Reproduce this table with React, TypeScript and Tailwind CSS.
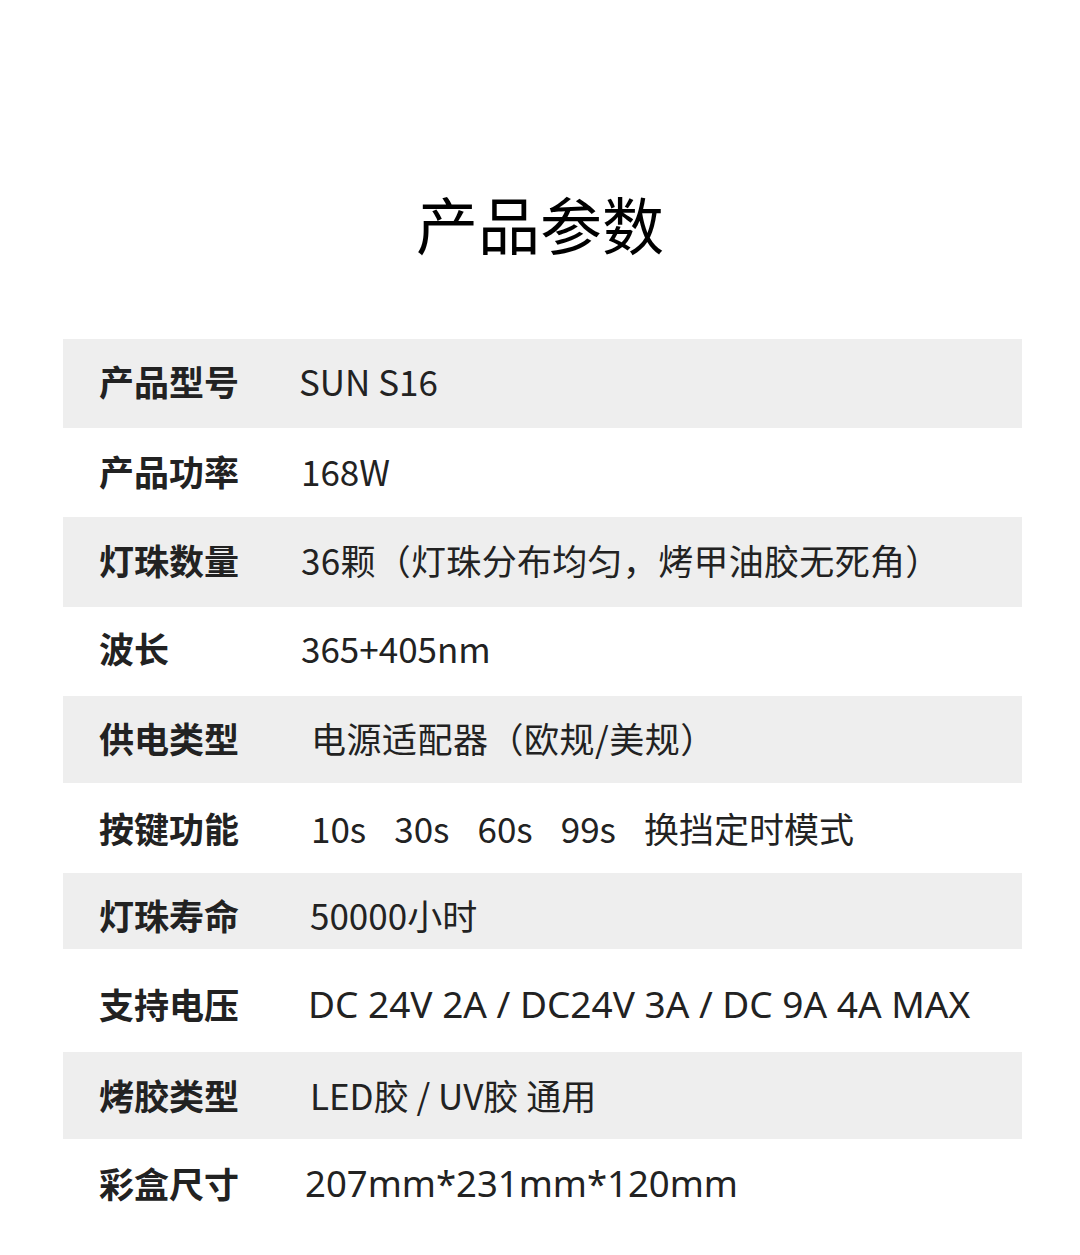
const font = "font-['Noto_Sans_CJK_SC','Noto_Sans',sans-serif]";

type Row = {
  label: string;
  value: string;
  gray: boolean;
  h: string;
  pt: string;
  vx: string;
  vf?: string;
};

const rows: Row[] = [
  { label: "产品型号", value: "SUN S16", gray: true, h: "h-[89px]", pt: "pt-[22px]", vx: "ml-[200px]" },
  { label: "产品功率", value: "168W", gray: false, h: "h-[89px]", pt: "pt-[23px]", vx: "ml-[202px]" },
  { label: "灯珠数量", value: "36颗（灯珠分布均匀，烤甲油胶无死角）", gray: true, h: "h-[90px]", pt: "pt-[23px]", vx: "ml-[202px] tracking-[0.3px]" },
  { label: "波长", value: "365+405nm", gray: false, h: "h-[89px]", pt: "pt-[21px]", vx: "ml-[202px]" },
  { label: "供电类型", value: "电源适配器（欧规/美规）", gray: true, h: "h-[87px]", pt: "pt-[22px]", vx: "ml-[212px] tracking-[0.5px]" },
  { label: "按键功能", value: "10s   30s   60s   99s   换挡定时模式", gray: false, h: "h-[90px]", pt: "pt-[25px]", vx: "ml-[212px] [word-spacing:1.5px]" },
  { label: "灯珠寿命", value: "50000小时", gray: true, h: "h-[76px]", pt: "pt-[22px]", vx: "ml-[211px]" },
  { label: "支持电压", value: "DC 24V 2A / DC24V 3A / DC 9A 4A MAX", gray: false, h: "h-[103px]", pt: "pt-[35px]", vx: "ml-[209px]", vf: "font-['Noto_Sans',sans-serif] text-[37px]" },
  { label: "烤胶类型", value: "LED胶 / UV胶 通用", gray: true, h: "h-[87px]", pt: "pt-[23px]", vx: "ml-[211px]" },
  { label: "彩盒尺寸", value: "207mm*231mm*120mm", gray: false, h: "h-[116px]", pt: "pt-[24px]", vx: "ml-[206px]", vf: "font-['Noto_Sans',sans-serif] text-[36.5px]" },
];

export default function App() {
  return (
    <div className={`w-[1080px] h-[1255px] bg-white ${font} text-[#222]`}>
      <div className="flex justify-center pt-[185px] h-[339px]">
        <h1 className="text-[62px] leading-[76px] font-normal text-black">
          产品参数
        </h1>
      </div>

      <div className="mx-[63px] w-[959px]">
        {rows.map((r) => (
          <div
            key={r.label}
            className={`flex items-start ${r.h} ${r.pt} ${r.gray ? "bg-[#eeeeee]" : "bg-white"}`}
          >
            <div className="ml-[36px] w-[0px] shrink-0 whitespace-nowrap text-[35px] leading-[40px] font-bold text-[#222]">
              {r.label}
            </div>
            <div className={`${r.vx} ${r.vf ?? "text-[35px]"} whitespace-pre leading-[40px] font-normal text-[#222]`}>
              {r.value}
            </div>
          </div>
        ))}
      </div>
    </div>
  );
}
